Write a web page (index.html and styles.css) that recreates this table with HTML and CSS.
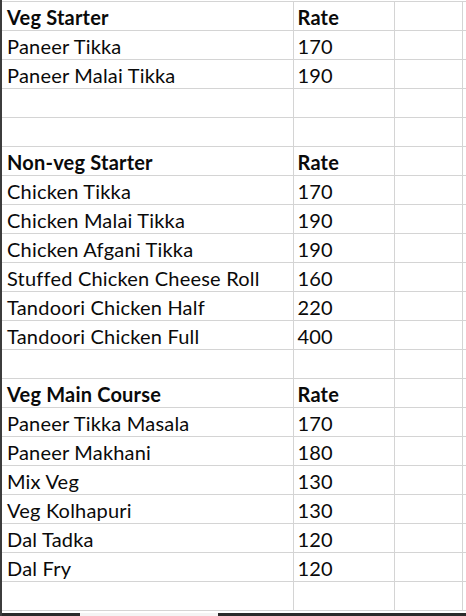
FILE: index.html
```html
<!DOCTYPE html>
<html>
<head>
<meta charset="utf-8">
<link rel="stylesheet" href="styles.css">
</head>
<body>
<div class="sheet">
  <table class="grid">
    <colgroup>
      <col class="c1"><col class="c2"><col class="c3"><col class="c4">
    </colgroup>
    <tr class="head"><td>Veg Starter</td><td>Rate</td><td></td><td></td></tr>
    <tr><td>Paneer Tikka</td><td>170</td><td></td><td></td></tr>
    <tr><td>Paneer Malai Tikka</td><td>190</td><td></td><td></td></tr>
    <tr><td></td><td></td><td></td><td></td></tr>
    <tr><td></td><td></td><td></td><td></td></tr>
    <tr class="head"><td>Non-veg Starter</td><td>Rate</td><td></td><td></td></tr>
    <tr><td>Chicken Tikka</td><td>170</td><td></td><td></td></tr>
    <tr><td>Chicken Malai Tikka</td><td>190</td><td></td><td></td></tr>
    <tr><td>Chicken Afgani Tikka</td><td>190</td><td></td><td></td></tr>
    <tr><td>Stuffed Chicken Cheese Roll</td><td>160</td><td></td><td></td></tr>
    <tr><td>Tandoori Chicken Half</td><td>220</td><td></td><td></td></tr>
    <tr><td>Tandoori Chicken Full</td><td>400</td><td></td><td></td></tr>
    <tr><td></td><td></td><td></td><td></td></tr>
    <tr class="head"><td>Veg Main Course</td><td>Rate</td><td></td><td></td></tr>
    <tr><td>Paneer Tikka Masala</td><td>170</td><td></td><td></td></tr>
    <tr><td>Paneer Makhani</td><td>180</td><td></td><td></td></tr>
    <tr><td>Mix Veg</td><td>130</td><td></td><td></td></tr>
    <tr><td>Veg Kolhapuri</td><td>130</td><td></td><td></td></tr>
    <tr><td>Dal Tadka</td><td>120</td><td></td><td></td></tr>
    <tr><td>Dal Fry</td><td>120</td><td></td><td></td></tr>
    <tr><td></td><td></td><td></td><td></td></tr>
  </table>
  <div class="tabs">
    <div class="tab-dark first"></div>
    <div class="tab-light"></div>
    <div class="tab-dark rest"></div>
  </div>
</div>
</body>
</html>
```
FILE: styles.css
```css
html, body {
  margin: 0;
  padding: 0;
  background: #ffffff;
}
body {
  width: 466px;
  height: 616px;
  overflow: hidden;
}
.sheet {
  padding-top: 1px;
  border-left: 2px solid #3c3c3c;
  height: 615px;
  overflow: hidden;
}
.grid {
  border-collapse: collapse;
  table-layout: fixed;
  width: 466px;
  font-family: Lato, "Open Sans", sans-serif;
  font-size: 20px;
  letter-spacing: 0.2px;
  color: #0a0a0a;
}
.c1 { width: 291px; }
.c2 { width: 101px; }
.c3 { width: 68px; }
.c4 { width: 6px; }
.grid td {
  border: 1px solid #d4d4d4;
  height: 26px;
  padding: 2px 0 0 4px;
  white-space: nowrap;
  overflow: hidden;
  line-height: 26px;
  vertical-align: top;
}
.grid td:first-child { border-left: none; padding-left: 5px; }
.head td { font-weight: bold; }
.tabs {
  display: flex;
  margin-top: 2px;
  height: 5px;
  margin-left: -2px;
}
.tab-dark { background: #2a2a2a; }
.first { width: 80px; }
.tab-light { width: 138px; background: #f4f4f4; }
.rest { flex: 1; }
```
